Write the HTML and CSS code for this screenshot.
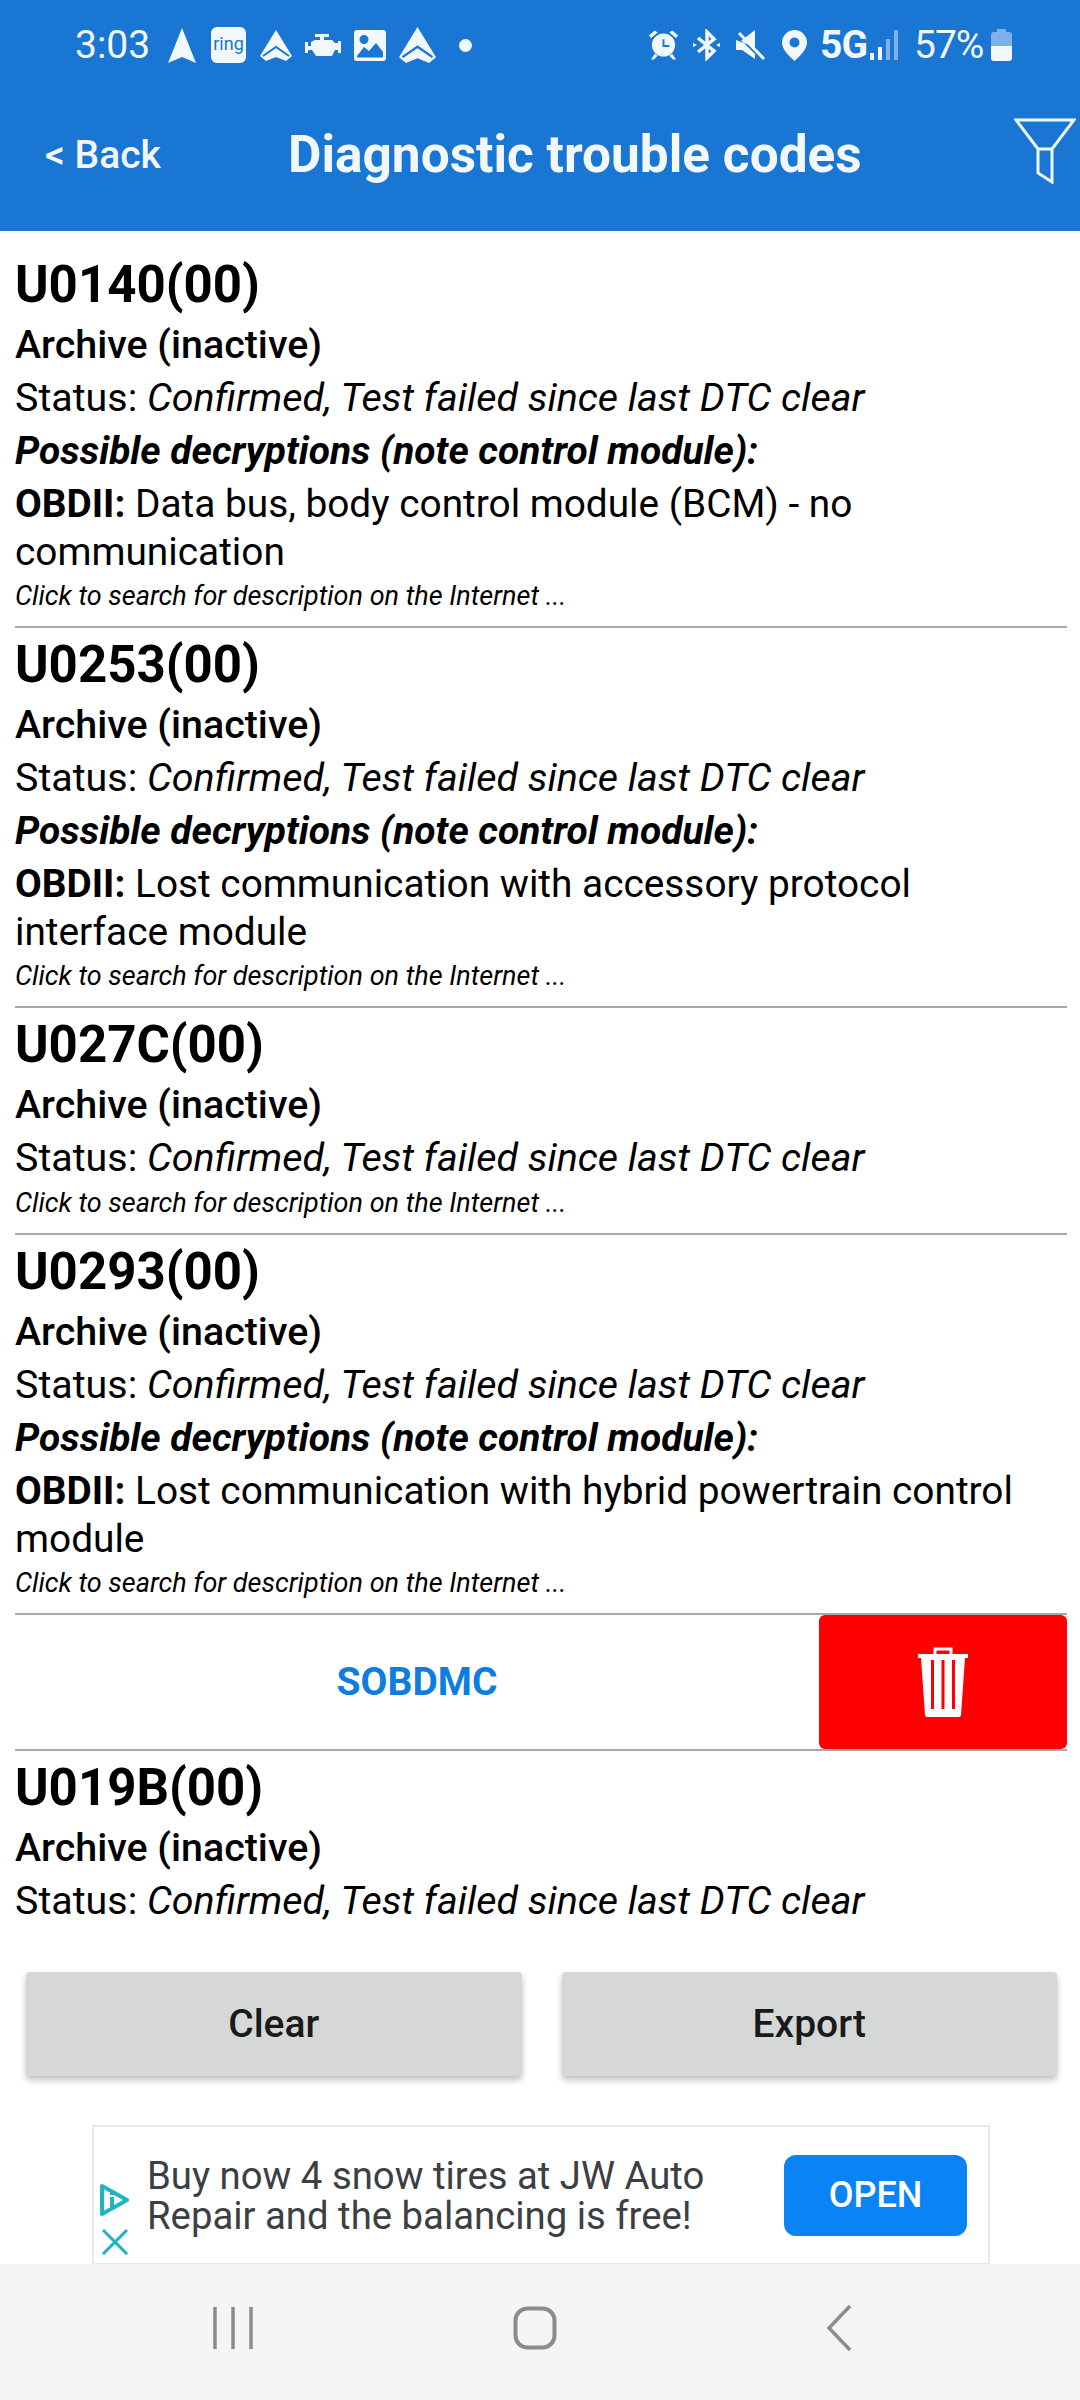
FILE: index.html
```html
<!DOCTYPE html>
<html lang="en">
<head>
    <meta charset="UTF-8">
    <meta name="viewport" content="width=device-width, initial-scale=1.0">
    <title>Diagnostic trouble codes</title>
    <link rel="stylesheet" href="styles.css">
</head>
<body>
    <div class="page">
        <div class="topbar">
            <div class="status">
                <span class="time">3:03</span>
                <svg class="s-nav" viewBox="0 0 28 35"><path d="M14 0L28 35L14 29L0 35Z"/></svg>
                <span class="ring">ring</span>
                <svg class="s-auto" viewBox="0 0 32 31"><path d="M16 0L32 26L26 31L16 27L6 31L0 26Z"/><path fill="none" stroke="#1976d2" stroke-width="2" d="M3 26L16 17L29 26"/></svg>
                <svg class="s-engine" viewBox="0 0 36 22"><path d="M10 0H24V3H19V6H27L30 9H33V7H36V19H33V16H30L27 22H11L7 16H3V19H0V8H3V12H6V8L10 6H15V3H10Z"/></svg>
                <svg class="s-image" viewBox="0 0 32 31"><path fill-rule="evenodd" d="M3 0H29A3 3 0 0 1 32 3V28A3 3 0 0 1 29 31H3A3 3 0 0 1 0 28V3A3 3 0 0 1 3 0ZM3 26V27.500H29V22L22 13L15 21L10 17ZM10 5A4.500 4.500 0 1 0 10 14A4.500 4.500 0 1 0 10 5Z"/></svg>
                <svg class="s-auto2" viewBox="0 0 32 31"><path d="M16 0L32 26L26 31L16 27L6 31L0 26Z"/><path fill="none" stroke="#1976d2" stroke-width="2" d="M3 26L16 17L29 26"/></svg>
                <span class="dot"></span>
                <span class="status-gap"></span>
                <svg class="s-alarm" viewBox="0 0 30 30"><path d="M6 0L9 2L2 8L0 5ZM24 0L30 5L28 8L21 2Z"/><path fill-rule="evenodd" d="M15 3A12 12 0 1 1 15 27A12 12 0 1 1 15 3ZM14 9V17H21V15H16V9Z"/><path d="M6 24L9 26L5 30L2 30ZM24 24L28 30L25 30L21 26Z"/></svg>
                <svg class="s-bt" viewBox="0 0 27 32"><path fill="none" stroke="#f2f7fc" stroke-width="3.500" d="M5 9L21 22L14 29V3L21 10L5 23"/><path d="M0 14L4 16L0 18ZM27 14L23 16L27 18Z"/></svg>
                <svg class="s-mute" viewBox="0 0 29 30"><path d="M0 10H6L19 0V17ZM0 10V20H6L19 29V24L5 10Z"/><path fill="none" stroke="#f2f7fc" stroke-width="3" d="M3 3L28 29"/></svg>
                <svg class="s-pin" viewBox="0 0 25 31"><path fill-rule="evenodd" d="M12.500 0A12.500 12.500 0 0 1 25 12.500C25 20 17 27 12.500 31C8 27 0 20 0 12.500A12.500 12.500 0 0 1 12.500 0ZM12.500 7.500A5 5 0 1 0 12.500 17.500A5 5 0 1 0 12.500 7.500Z"/></svg>
                <span class="net">5G</span>
                <svg class="s-signal" viewBox="0 0 28 30"><rect x="0" y="23" width="4" height="7" fill="#f2f7fc"/><rect x="8" y="17" width="4" height="13" fill="#f2f7fc"/><rect x="16" y="9" width="4" height="21" fill="#7fb0e8"/><rect x="24" y="0" width="4" height="30" fill="#7fb0e8"/></svg>
                <span class="batt-text">57%</span>
                <svg class="s-batt" viewBox="0 0 21 32"><path fill="#7fb0e8" d="M6 0H15V3H18A3 3 0 0 1 21 6V17H0V6A3 3 0 0 1 3 3H6Z"/><path fill="#f2f7fc" d="M0 17H21V29A3 3 0 0 1 18 32H3A3 3 0 0 1 0 29Z"/></svg>
            </div>
            <div class="header">
                <span class="back">&lt; Back</span>
                <span class="title">Diagnostic trouble codes</span>
                <svg class="filter" viewBox="0 0 62 66"><path fill="none" stroke="#f2f7fc" stroke-width="3" d="M2 2H60L38 31H24ZM24 31V55L38 64V31"/></svg>
            </div>
        </div>

        <div class="list">
            <div class="item">
                <div class="code">U0140(00)</div>
                <div class="line bold">Archive (inactive)</div>
                <div class="line">Status: <i>Confirmed, Test failed since last DTC clear</i></div>
                <div class="line decrypt">Possible decryptions (note control module):</div>
                <div class="line desc"><b>OBDII:</b> Data bus, body control module (BCM) - no communication</div>
                <div class="search">Click to search for description on the Internet ...</div>
            </div>
            <div class="item">
                <div class="code">U0253(00)</div>
                <div class="line bold">Archive (inactive)</div>
                <div class="line">Status: <i>Confirmed, Test failed since last DTC clear</i></div>
                <div class="line decrypt">Possible decryptions (note control module):</div>
                <div class="line desc"><b>OBDII:</b> Lost communication with accessory protocol interface module</div>
                <div class="search">Click to search for description on the Internet ...</div>
            </div>
            <div class="item short">
                <div class="code">U027C(00)</div>
                <div class="line bold">Archive (inactive)</div>
                <div class="line">Status: <i>Confirmed, Test failed since last DTC clear</i></div>
                <div class="search">Click to search for description on the Internet ...</div>
            </div>
            <div class="item">
                <div class="code">U0293(00)</div>
                <div class="line bold">Archive (inactive)</div>
                <div class="line">Status: <i>Confirmed, Test failed since last DTC clear</i></div>
                <div class="line decrypt">Possible decryptions (note control module):</div>
                <div class="line desc"><b>OBDII:</b> Lost communication with hybrid powertrain control module</div>
                <div class="search">Click to search for description on the Internet ...</div>
            </div>
            <div class="swipe">
                <span class="maker">SOBDMC</span>
                <div class="delete">
                    <svg class="trash" viewBox="0 0 50 70">
                        <path fill="none" stroke="#fff" stroke-width="3" d="M17 7V2H33V7"/>
                        <path fill="#fff" d="M0 7H50V11H47L43 68Q43 70 41 70H9Q7 70 7 68L3 11H0Z"/>
                        <path fill="#ff0000" d="M13 13H16V62H13ZM23.500 13H26.500V62H23.500ZM34 13H37V62H34Z"/>
                    </svg>
                </div>
            </div>
            <div class="item last">
                <div class="code">U019B(00)</div>
                <div class="line bold">Archive (inactive)</div>
                <div class="line">Status: <i>Confirmed, Test failed since last DTC clear</i></div>
            </div>
        </div>

        <div class="actions">
            <div class="btn">Clear</div>
            <div class="btn">Export</div>
        </div>

        <div class="ad-wrap">
            <div class="ad">
                <div class="ad-icons">
                    <svg class="ad-info" viewBox="0 0 31 34"><path fill="none" stroke="#1fb3c4" stroke-width="4" stroke-linejoin="round" d="M3 3L28 17L3 31Z"/><path fill="#1fb3c4" d="M11 14H15V24H11ZM11 9H15V12H11Z"/></svg>
                    <svg class="ad-close" viewBox="0 0 28 26"><path fill="none" stroke="#1fb3c4" stroke-width="3" d="M2 1L26 25M26 1L2 25"/></svg>
                </div>
                <div class="ad-text">Buy now 4 snow tires at JW Auto Repair and the balancing is free!</div>
                <div class="ad-open">OPEN</div>
            </div>
        </div>

        <div class="navbar">
            <svg class="nav-recent" viewBox="0 0 40 42"><path fill="none" stroke="#8c8c8c" stroke-width="3.500" d="M2 0V42M20 0V42M38 0V42"/></svg>
            <svg class="nav-home" viewBox="0 0 44 44"><rect x="2.500" y="2.500" width="39" height="39" rx="12" fill="none" stroke="#8c8c8c" stroke-width="4"/></svg>
            <svg class="nav-back" viewBox="0 0 26 46"><path fill="none" stroke="#8c8c8c" stroke-width="3.500" d="M24 1L3 23L24 45"/></svg>
        </div>
    </div>
</body>
</html>
```

FILE: styles.css
```css
body {
    margin: 0;
    font-family: Roboto, "Liberation Sans", sans-serif;
    background-color: #fff;
    color: #000;
}
.page {
    width: 1080px;
    height: 2400px;
    display: flex;
    flex-direction: column;
    overflow: hidden;
}

/* blue top part */
.topbar {
    height: 231px;
    background-color: #1976d2;
    color: #f2f7fc;
    flex: none;
}
.status {
    height: 90px;
    display: flex;
    align-items: center;
    padding-left: 75px;
}
.status svg {
    fill: #f2f7fc;
    flex: none;
}
.time {
    font-size: 39px;
    width: 93px;
}
.s-nav { width: 28px; height: 35px; margin-right: 15px; }
.ring {
    width: 35px;
    height: 36px;
    border-radius: 6px;
    background-color: #f2f7fc;
    color: #1976d2;
    font-size: 18px;
    line-height: 33px;
    text-align: center;
    margin-right: 14px;
}
.s-auto { width: 32px; height: 31px; margin-right: 13px; }
.s-engine { width: 36px; height: 22px; margin-right: 13px; }
.s-image { width: 32px; height: 31px; margin-right: 13px; }
.s-auto2 { width: 37px; height: 36px; margin-right: 23px; }
.dot {
    width: 13px;
    height: 13px;
    border-radius: 50%;
    background-color: #f2f7fc;
}
.status-gap { width: 177px; }
.s-alarm { width: 29px; height: 30px; margin-right: 15px; }
.s-bt { width: 27px; height: 32px; margin-right: 16px; }
.s-mute { width: 29px; height: 30px; margin-right: 17px; }
.s-pin { width: 25px; height: 31px; margin-right: 13px; }
.net {
    font-size: 39px;
    font-weight: 700;
    letter-spacing: -1px;
    width: 50px;
}
.s-signal { width: 28px; height: 30px; margin-right: 16px; }
.batt-text {
    font-size: 39px;
    width: 77px;
    letter-spacing: -1px;
}
.s-batt { width: 21px; height: 32px; }

.header {
    height: 129px;
    padding-bottom: 12px;
    display: flex;
    align-items: center;
    padding-left: 45px;
}
.back {
    font-size: 39px;
    font-weight: 500;
    width: 243px;
}
.title {
    font-size: 51.400px;
    font-weight: 700;
    width: 728px;
    white-space: nowrap;
}
.filter {
    width: 62px;
    height: 66px;
    flex: none;
    margin-top: -8px;
    margin-left: -2px;
}

/* code list */
.list {
    height: 1711px;
    flex: none;
    overflow: hidden;
    padding: 0 13px 0 15px;
}
.item {
    border-bottom: 2px solid #a8a8a8;
}
.item.last {
    border-bottom: none;
}
.code {
    font-size: 51px;
    font-weight: 700;
    line-height: 64px;
    height: 64px;
    padding-top: 5px;
}
.item:first-child .code {
    padding-top: 22px;
}
.line {
    font-size: 39.400px;
    line-height: 53px;
}
.bold {
    font-weight: 500;
    padding-top: 1px;
}
.decrypt {
    font-size: 38.900px;
    font-weight: 700;
    font-style: italic;
}
.desc {
    font-size: 38.800px;
    line-height: 47.500px;
    padding-top: 3px;
}
.desc b {
    font-weight: 700;
}
.search {
    font-size: 27px;
    font-style: italic;
    line-height: 42px;
    height: 51px;
}
.short .search {
    margin-top: -2px;
}

.swipe {
    height: 134px;
    display: flex;
    align-items: center;
    border-bottom: 2px solid #a8a8a8;
}
.maker {
    flex: 1;
    text-align: center;
    font-size: 39px;
    font-weight: 700;
    color: #0d7ee0;
}
.delete {
    width: 248px;
    height: 134px;
    flex: none;
    background-color: #ff0000;
    border-radius: 6px;
    display: flex;
    align-items: center;
    justify-content: center;
}
.trash {
    width: 50px;
    height: 70px;
}

/* bottom buttons */
.actions {
    height: 183px;
    flex: none;
    box-sizing: border-box;
    padding: 30px 23px 0 26px;
    display: flex;
    gap: 40px;
}
.btn {
    flex: 1;
    height: 104px;
    background-color: #d6d8d8;
    border-radius: 4px;
    box-shadow: 0 4px 6px rgba(0, 0, 0, 0.25);
    font-size: 39px;
    font-weight: 500;
    color: #1a1a1a;
    display: flex;
    align-items: center;
    justify-content: center;
}

.ad-wrap {
    flex: none;
    height: 140px;
    padding: 0 90px 0 92px;
}
.ad {
    height: 140px;
    box-sizing: border-box;
    border: 2px solid #e8e8e8;
    display: flex;
    align-items: center;
    padding: 0 21px 0 5px;
}
.ad-icons {
    width: 48px;
    flex: none;
    display: flex;
    flex-direction: column;
    gap: 12px;
    margin-top: 48px;
}
.ad-info { width: 31px; height: 34px; }
.ad-close { width: 28px; height: 26px; margin-left: 2px; }
.ad-text {
    width: 600px;
    font-size: 38.300px;
    line-height: 40px;
    color: #3c4043;
    margin-top: 1px;
}
.ad-open {
    margin-left: auto;
    width: 183px;
    height: 81px;
    flex: none;
    background-color: #0a84f5;
    border-radius: 12px;
    color: #fff;
    font-size: 36px;
    font-weight: 500;
    display: flex;
    align-items: center;
    justify-content: center;
}

.navbar {
    flex: 1;
    background-color: #f5f5f5;
    display: flex;
    align-items: center;
    padding-left: 213px;
    margin-top: -1px;
    padding-bottom: 8px;
}
.nav-recent { width: 40px; height: 42px; margin-right: 260px; flex: none; }
.nav-home { width: 44px; height: 44px; margin-right: 269px; flex: none; }
.nav-back { width: 26px; height: 46px; flex: none; }
```
